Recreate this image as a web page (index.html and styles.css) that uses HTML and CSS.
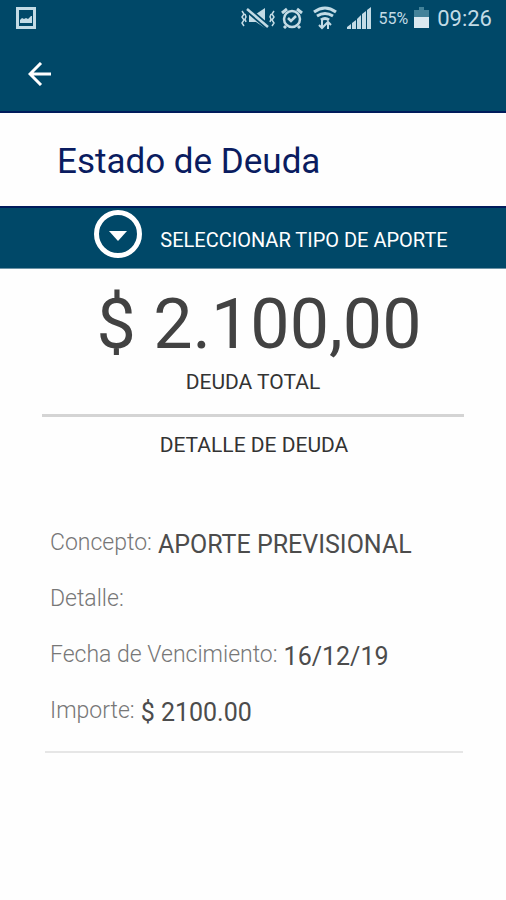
FILE: index.html
```html
<!DOCTYPE html>
<html lang="es">
  <head>
    <meta charset="UTF-8" />
    <meta name="viewport" content="width=device-width, initial-scale=1.0" />
    <title>Estado de Deuda</title>
    <link rel="stylesheet" href="styles.css">
  </head>
  <body>
    <header>
      <div class="status-bar">
        <svg class="picture" width="20" height="22" viewBox="0 0 20 22">
          <rect x="1.5" y="1.5" width="17" height="19" fill="none" stroke="#c3dbe5" stroke-width="3" />
          <path d="M4 16v-3l2-2 2 1 2-1 2 1 3-3h1v7z" fill="#c3dbe5" />
        </svg>
        <div class="status-right">
          <svg width="34" height="22" viewBox="0 0 34 22" fill="none" stroke="#c3dbe5" stroke-width="2">
            <path d="M1 4l2 3-2 3 2 3-2 3 2 3M4 7l1 3-1 2 1 3M33 4l-2 3 2 3-2 3 2 3-2 3M30 7l-1 3 1 2-1 3" stroke-width="1.5" />
            <path d="M8 7h7l9-6v20l-9-6H8z" fill="#c3dbe5" stroke="none" />
            <path d="M6 2l21 18" stroke="#004868" stroke-width="6" />
            <path d="M6 2l21 18" stroke-width="2.5" />
          </svg>
          <svg width="22" height="22" viewBox="0 0 22 22" fill="none" stroke="#c3dbe5" stroke-width="2.5">
            <circle cx="11" cy="12" r="8" />
            <path d="M1 6l5-4M21 6l-5-4M5 19l-2 2M17 19l2 2" stroke-width="3" />
            <path d="M7 11l3 3 5-5" />
          </svg>
          <svg class="wifi" width="24" height="24" viewBox="0 0 24 24" fill="none" stroke="#c3dbe5" stroke-width="3">
            <path d="M1 6q11-8 22 0M4 10q8-5 16 0M8 14q4-3 8 0" />
            <path d="M9 14v8M6 19l3 3 3-3M15 23v-7M12 19l3-3 3 3" stroke-width="2" />
          </svg>
          <svg class="signal" width="24" height="22" viewBox="0 0 24 22" fill="#c3dbe5">
            <path d="M0 22v-2l4-3v5zM5 22v-6l4-3v9zM10 22V12l4-4v14zM15 22V7l4-3v18zM20 22V3l4-3v22z" />
          </svg>
          <span class="percent">55%</span>
          <svg class="battery" width="15" height="22" viewBox="0 0 15 22">
            <path d="M0 3h5V0h5v3h5v8H0z" fill="#438299" />
            <path d="M0 10h15v11H0z" fill="#dbe9f0" />
          </svg>
          <span class="clock">09:26</span>
        </div>
      </div>
      <button class="back" aria-label="Volver">
        <svg width="24" height="24" viewBox="0 0 24 24" fill="none" stroke="#ffffff" stroke-width="3">
          <path d="M23 12H3M13 1L2 12l11 11" />
        </svg>
      </button>
    </header>

    <main>
      <h1>Estado de Deuda</h1>

      <button class="select-type">
        <svg width="48" height="48" viewBox="0 0 48 48">
          <circle cx="24" cy="24" r="21.5" fill="none" stroke="#ffffff" stroke-width="5" />
          <path d="M15 21h18l-9 10z" fill="#ffffff" />
        </svg>
        <span>SELECCIONAR TIPO DE APORTE</span>
      </button>

      <section class="total">
        <p class="amount">$ 2.100,00</p>
        <p class="caption">DEUDA TOTAL</p>
      </section>

      <section class="detail">
        <h2 class="caption">DETALLE DE DEUDA</h2>
        <dl>
          <div class="row"><dt>Concepto:</dt><dd>APORTE PREVISIONAL</dd></div>
          <div class="row"><dt>Detalle:</dt><dd></dd></div>
          <div class="row"><dt>Fecha de Vencimiento:</dt><dd>16/12/19</dd></div>
          <div class="row"><dt>Importe:</dt><dd>$ 2100.00</dd></div>
        </dl>
      </section>
    </main>
  </body>
</html>
```
FILE: styles.css
```css
* {
  margin: 0;
  padding: 0;
  box-sizing: border-box;
}
body {
  background-color: #fefefe;
  color: #333333;
  font-family: Roboto, "Liberation Sans", sans-serif;
}
button {
  border: none;
  font-family: inherit;
  cursor: pointer;
}
svg {
  display: block;
  flex-shrink: 0;
}
header {
  background-color: #004868;
  border-bottom: 2px solid #001c5c;
}
.status-bar {
  display: flex;
  justify-content: space-between;
  align-items: center;
  height: 36px;
  padding: 0 14px 0 16px;
  color: #c3dbe5;
}
.status-right {
  display: flex;
  align-items: center;
  gap: 6px;
}
.wifi {
  margin-left: 4px;
}
.signal {
  margin-left: 4px;
}
.percent {
  margin-left: 2px;
  font-size: 16px;
}
.clock {
  margin-left: 2px;
  font-size: 22px;
}
.back {
  display: block;
  padding: 26px 28px 25px;
  background: none;
}
h1 {
  padding: 26px 57px 22px;
  line-height: 45px;
  font-size: 35px;
  font-weight: 400;
  color: #0a1c60;
}
.select-type {
  display: flex;
  align-items: center;
  justify-content: center;
  gap: 18px;
  width: 100%;
  padding: 2px 0 10px 36px;
  border-top: 2px solid #001c5c;
  border-bottom: 1px solid #6c93a6;
  background-color: #004868;
  color: #ffffff;
  font-size: 20px;
}
.select-type span {
  padding-top: 12px;
}
.total {
  margin: 0 42px;
  padding: 13px 0 16px;
  border-bottom: 3px solid #d4d4d4;
  text-align: center;
}
.amount {
  padding-left: 12px;
  line-height: 84px;
  font-size: 70px;
  color: #424242;
}
.caption {
  line-height: 32px;
  font-size: 21px;
  font-weight: 400;
  text-align: center;
}
.detail {
  margin: 0 43px 0 45px;
  padding-top: 12px;
  border-bottom: 2px solid #e6e6e6;
}
dl {
  padding: 54px 5px 12px;
}
.row {
  display: flex;
  gap: 6px;
  height: 56px;
  line-height: 56px;
}
dt {
  font-size: 23px;
  font-weight: 300;
  color: #777777;
}
dd {
  padding-top: 2px;
  font-size: 25px;
  color: #4c4c4c;
}
```
